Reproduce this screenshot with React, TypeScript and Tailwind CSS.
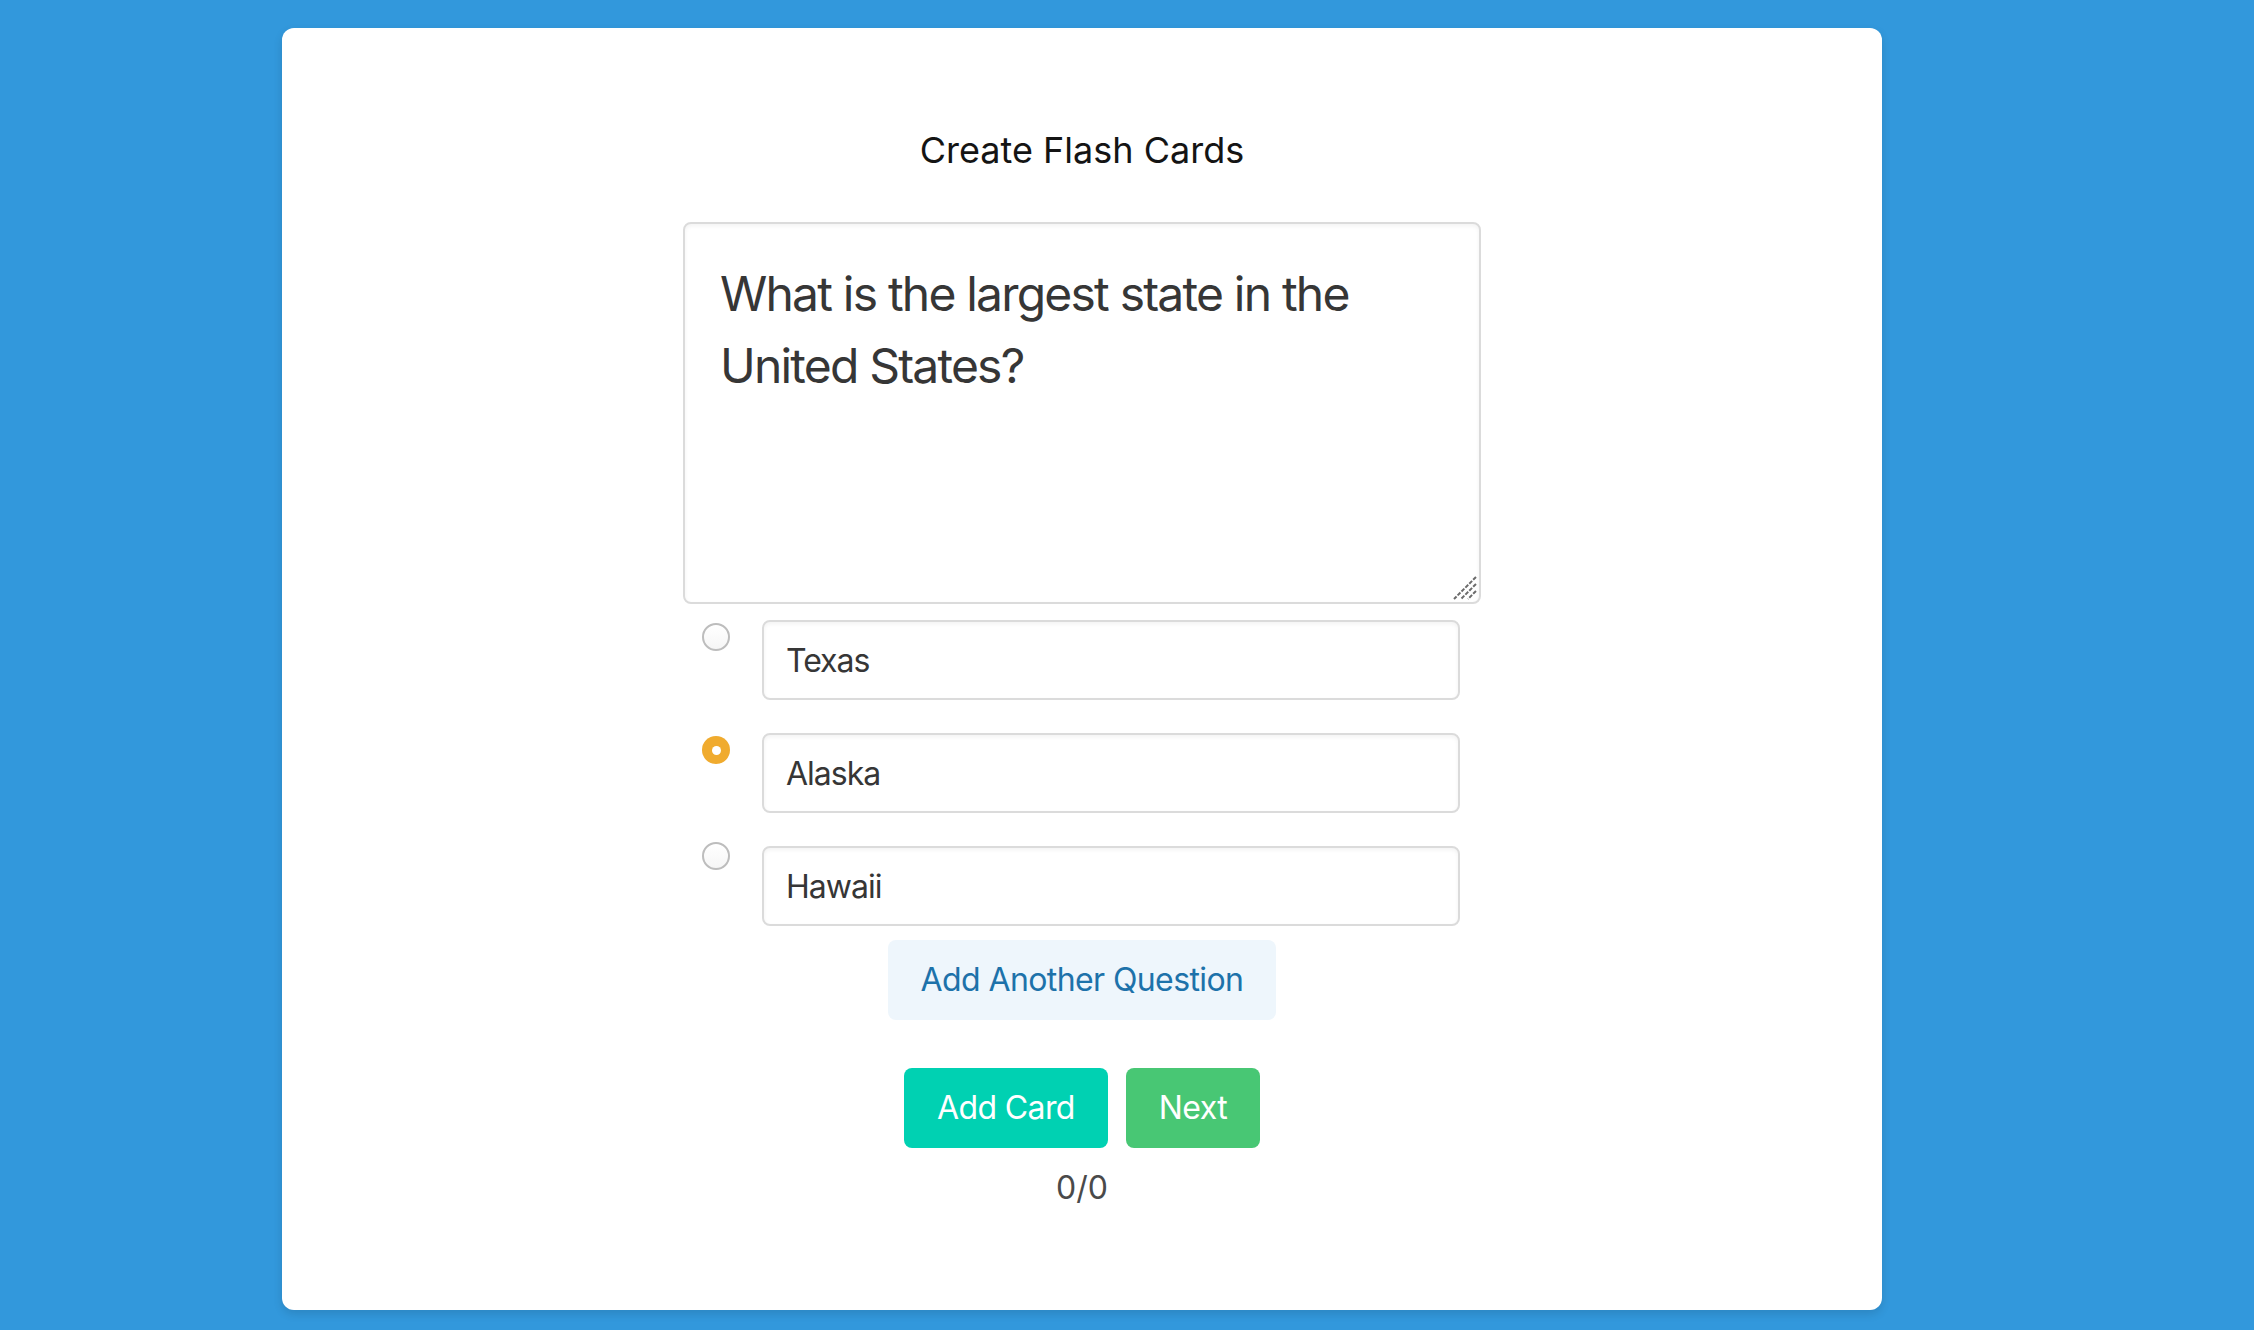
import React from 'react';

const answers = [
  { text: 'Texas', checked: false, radioTop: 'mt-[3px]' },
  { text: 'Alaska', checked: true, radioTop: 'mt-[3px]' },
  { text: 'Hawaii', checked: false, radioTop: '-mt-[4px]' },
];

function Radio({ checked }: { checked: boolean }) {
  if (checked) {
    return (
      <div className="w-[28px] h-[28px] rounded-full bg-[#f0ab2e] flex items-center justify-center">
        <div className="w-[9px] h-[9px] rounded-full bg-white" />
      </div>
    );
  }
  return (
    <div className="w-[28px] h-[28px] rounded-full border-[2px] border-[#bdbdbd] bg-gradient-to-b from-white to-[#f6f6f6]" />
  );
}

export default function App() {
  return (
    <div className="min-h-[1330px] w-full bg-[#3298dc] pt-[28px] pb-[20px] font-['Inter',sans-serif]">
      <div className="ml-[282px] w-[1600px] h-[1282px] bg-white rounded-[12px] shadow-[0_4px_10px_rgba(10,10,10,0.12)] pt-[100px]">
        {/* title */}
        <h1 className="text-center text-[36px] leading-[44px] text-[#141414]">Create Flash Cards</h1>

        <div className="w-[798px] mx-auto mt-[50px]">
          {/* question */}
          <div className="relative">
            <textarea
              defaultValue="What is the largest state in the United States?"
              className="block w-[798px] h-[382px] resize-none border-[2px] border-[#dbdbdb] rounded-[8px] py-[34px] px-[35px] text-[48px] leading-[72px] tracking-[-1.8px] text-[#363636] shadow-[inset_0_2px_4px_rgba(10,10,10,0.05)] outline-none"
            />
            <svg className="absolute right-[3px] bottom-[3px]" width="26" height="26" viewBox="0 0 26 26">
              <g stroke="#6b6b6b" strokeWidth="2" strokeDasharray="4 1.5">
                <line x1="24" y1="2" x2="2" y2="24" />
                <line x1="24" y1="9" x2="9" y2="24" />
                <line x1="24" y1="16" x2="16" y2="24" />
              </g>
            </svg>
          </div>

          {/* answers */}
          <div className="mt-[16px] flex flex-col gap-[33px]">
            {answers.map((a) => (
              <div key={a.text} className="flex items-start pl-[19px]">
                <div className={a.radioTop}>
                  <Radio checked={a.checked} />
                </div>
                <input
                  defaultValue={a.text}
                  className="ml-[32px] w-[698px] h-[80px] border-[2px] border-[#dbdbdb] rounded-[8px] px-[22px] text-[32px] tracking-[-1px] text-[#363636] shadow-[inset_0_2px_4px_rgba(10,10,10,0.05)] outline-none"
                />
              </div>
            ))}
          </div>

          <div className="flex justify-center mt-[14px]">
            <button className="h-[80px] px-[33px] rounded-[8px] bg-[#eef6fc] text-[#1d72aa] text-[32px] tracking-[-0.6px]">
              Add Another Question
            </button>
          </div>

          <div className="flex justify-center gap-[18px] mt-[48px]">
            <button className="h-[80px] px-[33px] rounded-[8px] bg-[#00d1b2] text-white text-[32px] tracking-[-0.6px]">Add Card</button>
            <button className="h-[80px] px-[33px] rounded-[8px] bg-[#48c774] text-white text-[32px] tracking-[-0.6px]">Next</button>
          </div>

          <p className="mt-[16px] text-center text-[32px] leading-[48px] text-[#4a4a4a]">0/0</p>
        </div>
      </div>
    </div>
  );
}
